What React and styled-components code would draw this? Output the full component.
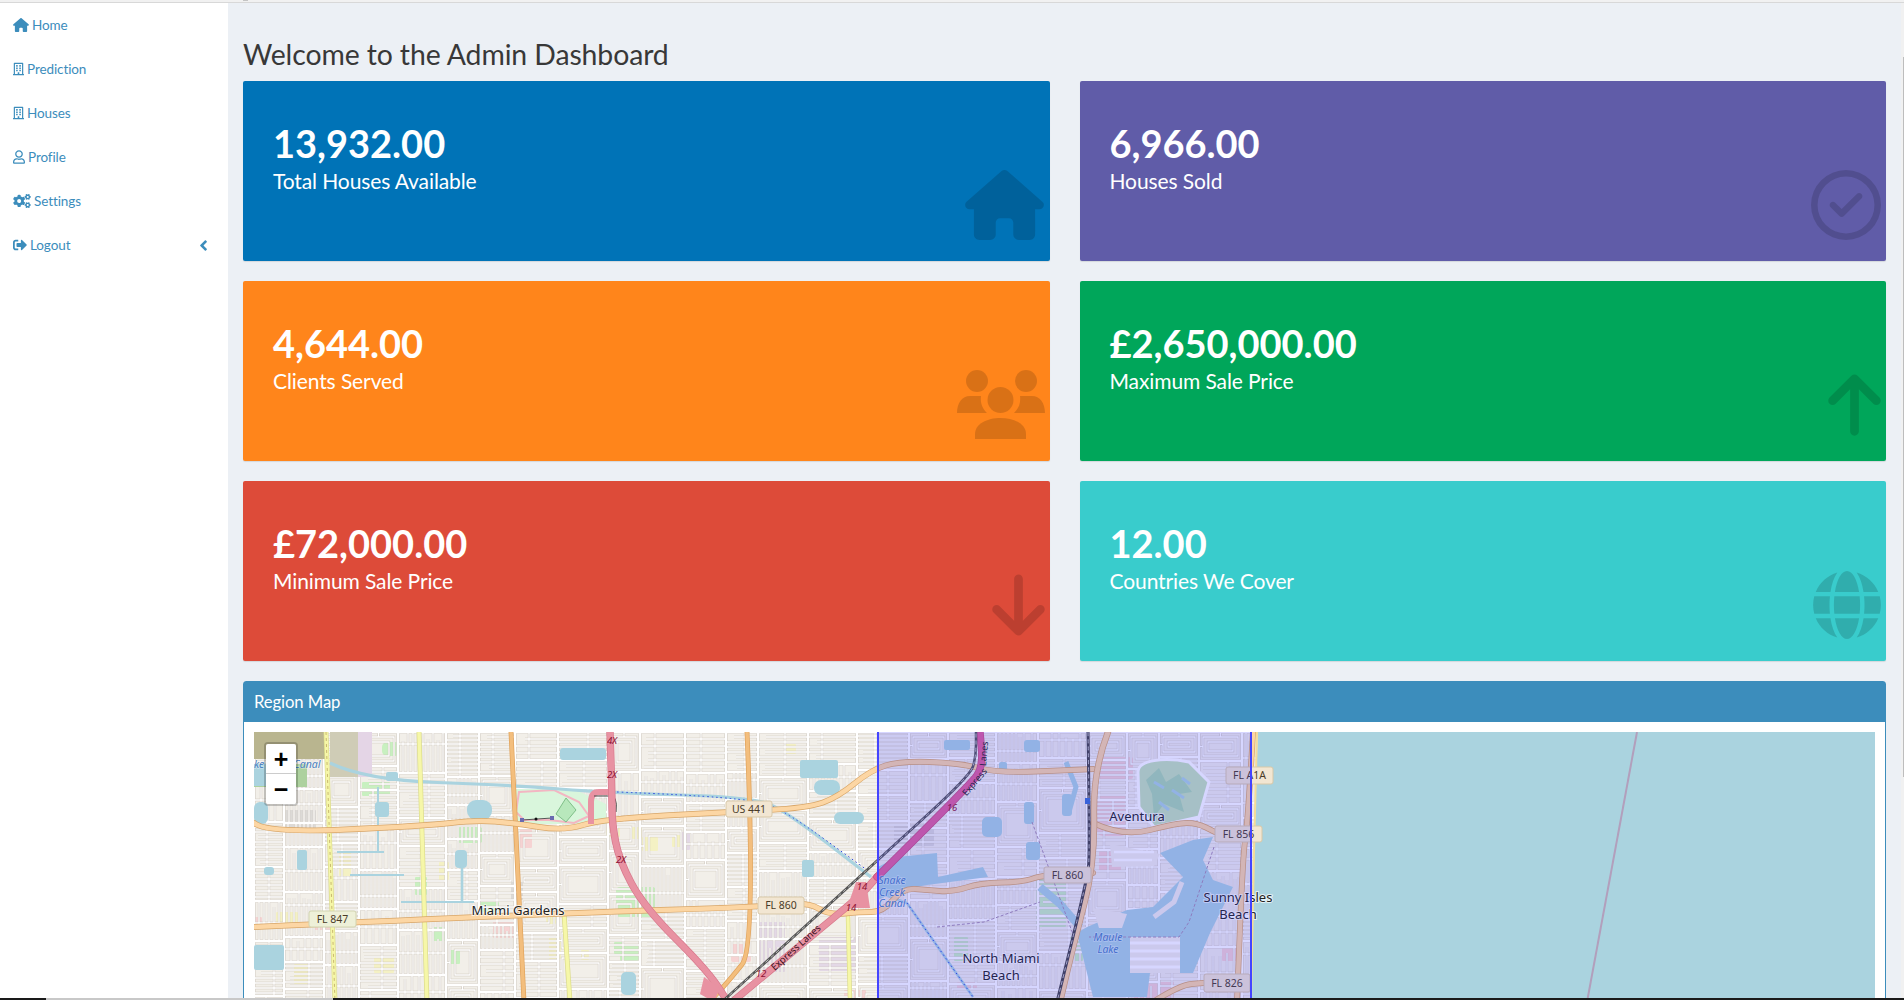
import React from "react";
import styled, { createGlobalStyle } from "styled-components";
import { FaHouse, FaArrowUp, FaArrowDown, FaRegCircleCheck } from "react-icons/fa6";
import { FaRegBuilding, FaRegUser, FaCogs, FaSignOutAlt, FaAngleLeft, FaGlobe } from "react-icons/fa";

const FONT = `Lato, "Open Sans", "Liberation Sans", sans-serif`;

const Global = createGlobalStyle`
  html, body { margin: 0; height: 1000px; overflow: hidden; background: #ecf0f5; }
  body { font-family: ${FONT}; color: #333; }
  * { box-sizing: border-box; }
`;

const Page = styled.div`
  display: flex; flex-direction: column; height: 1000px; overflow: hidden;
`;
const TopStrip = styled.div`
  flex: none; height: 3px; background: #f1f1f1; border-bottom: 1px solid #d8d8d8; padding-left: 243px;
`;
const TopNub = styled.div`
  width: 5px; height: 1px; background: #c4c4c4;
`;
const Body = styled.div`
  flex: 1; min-height: 0; display: flex;
`;
const Sidebar = styled.nav`
  flex: none; width: 228px; background: #fff;
`;
const NavRow = styled.a`
  display: flex; align-items: center; height: 44px; padding: 0 13px; gap: 3px;
  color: #3c8dbc; font-size: 13.5px; letter-spacing: -0.1px;
`;
const NavIcon = styled.span`
  flex: none; display: flex; width: ${p => p.$w}px; height: 14px;
  svg { width: 100%; height: 100%; }
`;
const NavChevron = styled.span`
  margin-left: auto; margin-right: 7px; display: flex; width: 9px; height: 17px;
  svg { width: 100%; height: 100%; }
`;
const Main = styled.main`
  flex: 1; min-width: 0; padding: 0 18px 0 15px; overflow: hidden;
`;
const Title = styled.h1`
  margin: 0; height: 78px; padding-top: 33px; font-size: 28.4px; line-height: 36px; font-weight: 400; color: #383838;
  letter-spacing: -0.1px; white-space: nowrap;
`;
const Cards = styled.section`
  display: grid; grid-template-columns: 1fr 1fr; column-gap: 30px; row-gap: 20px; margin-bottom: 20px;
`;
const Card = styled.article`
  position: relative; height: 180px; border-radius: 2px; background: ${p => p.$bg}; color: #fff;
  padding: 38px 30px 0; box-shadow: 0 1px 1px rgba(0,0,0,.1); overflow: hidden;
`;
const Value = styled.div`
  font-size: 38px; line-height: 48px; font-weight: 700;
`;
const Label = styled.div`
  font-size: 21px; line-height: 28px; letter-spacing: -0.1px;
`;
const CardIcon = styled.span`
  position: absolute; right: ${p => p.$right ?? 5}px; bottom: 21px; display: flex;
  width: ${p => p.$w}px; height: 70px; color: rgba(0,0,0,.15);
  svg { width: 100%; height: 100%; }
`;
const Panel = styled.section`
  border: 1px solid #3c8dbc; border-radius: 3px 3px 0 0; background: #fff;
`;
const PanelHead = styled.header`
  height: 40px; background: #3c8dbc; color: #fff; padding: 0 10px; display: flex; align-items: center;
  font-size: 16.7px; letter-spacing: -0.1px;
`;
const PanelBody = styled.div`
  padding: 10px;
`;
const MapBox = styled.div`
  position: relative; height: 300px; background: #aad3df; overflow: hidden;
  svg.map { display: block; }
`;
const Zoom = styled.div`
  position: absolute; left: 10px; top: 10px; width: 34px; border: 2px solid rgba(0,0,0,.2); border-radius: 4px;
  background-clip: padding-box; display: flex; flex-direction: column;
`;
const ZoomBtn = styled.a`
  height: 30px; background: #fff; color: #000; display: flex; align-items: center; justify-content: center;
  font: 700 25px/30px "Liberation Sans", sans-serif;
  &:first-child { border-bottom: 1px solid #ccc; border-radius: 2px 2px 0 0; }
  &:last-child { border-radius: 0 0 2px 2px; }
`;
const BottomBar = styled.div`
  position: fixed; left: 0; right: 0; bottom: 0; height: 2px; display: flex;
`;
const BarPart = styled.div`
  height: 2px;
  width: ${p => p.$w ? p.$w + "px" : "auto"};
  flex: ${p => p.$w ? "none" : "1"};
  background: ${p => p.$c};
`;
const ScrollTrack = styled.div`
  position: fixed; top: 3px; right: 0; width: 3px; height: 995px; background: #f1f1f1;
`;
const ScrollThumb = styled.div`
  position: absolute; right: 0; top: 54px; width: 1px; height: 720px; background: #bdbdbd;
`;

/* three-person glyph: two heads behind, one in front */
const PeopleIcon = () => (
  <svg viewBox="0 0 88 70" fill="currentColor">
    <circle cx="20" cy="11" r="11" />
    <circle cx="69" cy="11" r="11" />
    <circle cx="43.5" cy="30" r="13" />
    <path d="M0 43C0 33 5 26 13 26H24C23 34 26 39 30 43Z" />
    <path d="M88 43C88 33 83 26 75 26H63C64 34 61 39 57 43Z" />
    <path d="M18 69V64C18 54 30 48 43.5 48C57 48 69 54 69 64V69Z" />
  </svg>
);

/* ---------- map drawing ---------- */
const smooth = pts => {
  let d = `M${pts[0][0]} ${pts[0][1]}`;
  for (let i = 1; i < pts.length - 1; i++) {
    const mx = (pts[i][0] + pts[i + 1][0]) / 2, my = (pts[i][1] + pts[i + 1][1]) / 2;
    d += `Q${pts[i][0]} ${pts[i][1]} ${mx} ${my}`;
  }
  const l = pts[pts.length - 1];
  return d + `L${l[0]} ${l[1]}`;
};

function rng(seed) {
  let s = seed;
  return () => { s = (s * 16807) % 2147483647; return s / 2147483647; };
}

function streets() {
  const r = rng(4242);
  let fine = "", main = "";
  const H = 270;
  for (let x = 0; x < 1000;) {
    const w = 30 + Math.floor(r() * 24);
    for (let y = 0; y < H;) {
      const h = 24 + Math.floor(r() * 22);
      main += `M${x} ${y}h${w}`;
      const k = r();
      const step = 4 + Math.floor(r() * 4);
      if (k < 0.45) {
        for (let yy = y + step; yy < y + h - 2; yy += step) {
          const inset = r() < 0.35 ? 4 + Math.floor(r() * 8) : 0;
          fine += `M${x + inset} ${yy}h${w - inset}`;
        }
        fine += `M${x + Math.floor(w * (0.3 + r() * 0.4))} ${y}v${h}`;
      } else if (k < 0.82) {
        for (let xx = x + step; xx < x + w - 2; xx += step) {
          const inset = r() < 0.35 ? 4 + Math.floor(r() * 6) : 0;
          fine += `M${xx} ${y + inset}v${h - inset}`;
        }
        fine += `M${x} ${y + Math.floor(h * (0.3 + r() * 0.4))}h${w}`;
      } else {
        const cy = y + h / 2, cx = x + w / 2;
        fine += `M${x + 4} ${y + 5}H${x + w - 4}V${y + h - 5}H${x + 4}Z`;
        fine += `M${x + 9} ${y + 10}H${x + w - 9}V${y + h - 10}H${x + 9}Z`;
        fine += `M${cx} ${y}V${y + 5}M${x} ${cy}H${x + 4}`;
      }
      y += h;
    }
    main += `M${x} 0v${H}`;
    x += w;
  }
  return { fine, main };
}
const ST = streets();

const blobs = {
  water: [
    [213, 68, 25, 20, 9], [121, 70, 14, 15, 3], [546, 28, 38, 18, 2], [560, 48, 26, 15, 7], [306, 16, 46, 12, 3],
    [43, 118, 10, 20, 2], [201, 118, 12, 18, 4], [548, 128, 12, 17, 2], [367, 240, 15, 23, 5], [0, 213, 30, 25, 2],
    [0, 70, 14, 22, 6], [132, 40, 12, 9, 2], [580, 80, 30, 12, 6], [10, 135, 10, 8, 3],
    [728, 85, 20, 20, 5], [770, 70, 10, 22, 3], [772, 110, 14, 18, 3], [690, 8, 26, 10, 2], [770, 8, 16, 12, 3],
    [808, 62, 10, 22, 3], [745, 30, 8, 12, 2]
  ],
  green: [
    [108, 50, 28, 14, 1], [128, 10, 18, 14, 5], [178, 195, 14, 14, 1], [161, 145, 12, 18, 1], [362, 155, 40, 30, 4],
    [203, 95, 26, 16, 4], [196, 218, 10, 14, 1], [366, 212, 20, 18, 3], [225, 170, 20, 10, 1], [360, 210, 10, 12, 1],
    [782, 145, 30, 50, 1], [815, 205, 14, 24, 1], [700, 205, 14, 24, 1]
  ],
  yellow: [
    [418, 103, 18, 12, 1], [388, 105, 16, 14, 1], [378, 95, 10, 12, 1], [22, 180, 22, 14, 1], [120, 225, 20, 16, 1],
    [292, 180, 10, 12, 1], [295, 205, 12, 22, 1], [327, 218, 8, 10, 1], [40, 232, 14, 20, 1], [85, 120, 12, 24, 1],
    [185, 130, 10, 18, 1], [352, 95, 14, 10, 1], [530, 12, 12, 10, 1]
  ],
  pink: [
    [266, 95, 12, 21, 1], [239, 188, 23, 18, 1], [477, 212, 20, 18, 2], [0, 185, 8, 10, 1], [60, 188, 20, 10, 1], [590, 258, 22, 8, 1],
    [843, 25, 36, 22, 2], [843, 62, 30, 42, 6], [845, 118, 22, 22, 2], [880, 250, 40, 16, 1], [968, 215, 18, 14, 1], [703, 250, 20, 8, 1]
  ],
  lilac: [
    [426, 100, 10, 18, 1], [505, 190, 26, 50, 1], [565, 205, 40, 34, 1]
  ],
  grey: [
    [30, 78, 32, 20, 1], [257, 150, 12, 18, 1], [640, 92, 40, 22, 1], [290, 175, 8, 8, 1]
  ]
};

const COL = { green: "#c8f0c0", yellow: "#f4f1c4", pink: "#f6d3d3", lilac: "#e3d8e6", grey: "#dcdad7" };

const Road = ({ p, w, fill, edge }) => {
  const d = smooth(p);
  return (
    <>
      <path d={d} fill="none" stroke={edge} strokeWidth={w + 1.4} strokeLinecap="round" strokeLinejoin="round" />
      <path d={d} fill="none" stroke={fill} strokeWidth={w} strokeLinecap="round" strokeLinejoin="round" />
    </>
  );
};

const ORANGE = { fill: "#fcd6a4", edge: "#d8a668" };
const VERT = { fill: "#f3be7d", edge: "#e0a35c" };
const YEL = { fill: "#f6f7a8", edge: "#dcdc8c" };
const MOTOR = { fill: "#e892a2", edge: "#d8788c" };

const Shield = ({ x, y, w, h, text, fill = "#f2e6d2", edge = "#d8c8a8" }) => (
  <g>
    <rect x={x} y={y} width={w} height={h} rx="2" fill={fill} stroke={edge} />
    <text x={x + w / 2} y={y + h / 2 + 3.6} textAnchor="middle" fontSize="10.5" fill="#4a3c28" fontFamily='"Noto Sans", sans-serif'>{text}</text>
  </g>
);

const Place = ({ x, y, children, size = 13 }) => (
  <text x={x} y={y} textAnchor="middle" fontSize={size} fill="#222" fontFamily='"Noto Sans", sans-serif'
    stroke="rgba(255,255,255,.7)" strokeWidth="2" paintOrder="stroke">{children}</text>
);
const Water = ({ x, y, children }) => (
  <text x={x} y={y} textAnchor="middle" fontSize="10.5" fontStyle="italic" fill="#4a7fc0" fontFamily='"Noto Sans", sans-serif'
    stroke="rgba(255,255,255,.4)" strokeWidth="1.4" paintOrder="stroke">{children}</text>
);
const Ref = ({ x, y, children, rot }) => (
  <text x={x} y={y} textAnchor="middle" fontSize="9.5" fontStyle="italic" fill="#8c1030" fontFamily='"Noto Sans", sans-serif'
    transform={rot ? `rotate(${rot} ${x} ${y})` : undefined}>{children}</text>
);

const MapArt = () => (
  <svg className="map" width="1621" height="300" viewBox="0 0 1621 300">
    <rect x="0" y="0" width="1004" height="300" fill="#f2efe9" />
    {Object.entries(blobs).filter(([k]) => k !== "water").map(([k, arr]) =>
      arr.map((b, i) => <rect key={k + i} x={b[0]} y={b[1]} width={b[2]} height={b[3]} rx={b[4]} fill={COL[k]} />)
    )}
    <path d={ST.fine} fill="none" stroke="#c9c2b8" strokeWidth="2.3" />
    <path d={ST.main} fill="none" stroke="#c9c2b8" strokeWidth="3.2" />
    <path d={ST.fine} fill="none" stroke="#fff" strokeWidth="1.3" />
    <path d={ST.main} fill="none" stroke="#fff" strokeWidth="2.4" />

    {/* sea east of the coast line */}
    <path d="M1004 0L999 121L996 300H1100V0Z" fill="#aad3df" />

    {/* large land-use areas at the top left */}
    <rect x="0" y="0" width="72" height="27" fill="#b9b58f" />
    <rect x="76" y="0" width="28" height="45" fill="#cfccb6" />
    <rect x="104" y="0" width="14" height="45" fill="#e4d5e6" />
    <rect x="0" y="32" width="53" height="23" fill="#add19e" />
    <path d="M0 32h14v22H0z" fill="#aad3df" />

    {/* park */}
    <path d="M260 57H320L352 72V92H262Z" fill="#d9f6dc" />
    <path d="M265 60L300 58L325 70L335 84L320 91L295 88L270 88L262 80Z" fill="none" stroke="#f3b6c2" strokeWidth="2" />
    <path d="M302 82L312 66L322 78L312 90Z" fill="#b8e8bc" stroke="#7fbf88" />
    {/* golf course */}
    <path d="M884 40C884 28 910 25 935 30L955 50L945 85L900 95L885 75Z" fill="#c4e4b8" stroke="#fff" strokeWidth="3" />
    <path d="M892 48L905 36L912 50L925 42L938 60L925 62L930 80L910 72L900 85L898 62Z" fill="#a8d8ae" />
    <path d="M900 50L910 56M918 58L930 66M905 70L915 78M928 46L936 52" stroke="#aad3df" strokeWidth="3" />
    {/* bays */}
    <path d="M624 135L643 125L683 121L684 145L729 135L734 145L673 153L646 158L624 168Z" fill="#aad3df" />
    <path d="M833 195L873 178L899 175L929 145L906 121L939 108L959 105L949 128L959 148L979 155L956 201L939 241L896 241L893 265L839 265L823 201Z" fill="#aad3df" />
    <path d="M786 155L806 172L826 195" fill="none" stroke="#aad3df" strokeWidth="8" />
    <path d="M812 30L822 55L815 80" fill="none" stroke="#aad3df" strokeWidth="5" />
    <path d="M876 205H926V241H876Z" fill="#f2efe9" />
    <path d="M876 211H926M876 219H926M876 227H926M876 235H926" stroke="#fff" strokeWidth="3" />
    <path d="M839 176L873 182L868 196L845 196Z" fill="#f2efe9" />
    <path d="M900 185L920 170L928 150" stroke="#f2efe9" strokeWidth="5" fill="none" />
    <path d="M856 112L906 122L900 134L858 135Z" fill="#f2efe9" />
    <path d="M860 120H900M860 128H898" stroke="#fff" strokeWidth="2.4" />
    {blobs.water.map((b, i) => <rect key={"w" + i} x={b[0]} y={b[1]} width={b[2]} height={b[3]} rx={b[4]} fill="#aad3df" />)}

    {/* canals */}
    <path d={smooth([[76, 31], [112, 48], [255, 53], [356, 61], [499, 65], [533, 80], [617, 145]])} fill="none" stroke="#aad3df" strokeWidth="3.2" />
    <path d="M124 55V120M83 120H130M96 143H150M147 170H220" fill="none" stroke="#aad3df" strokeWidth="2" />
    <path d="M208 134V170M623 160L653 171L719 265" fill="none" stroke="#aad3df" strokeWidth="2.6" />
    <path d={smooth([[363, 60], [495, 65], [533, 80], [613, 138]])} fill="none" stroke="#2f47e0" strokeWidth="1" strokeDasharray="1.5 3" />
    <path d="M653 171L719 265" fill="none" stroke="#2f47e0" strokeWidth="1" strokeDasharray="1.5 3" />
    <path d="M683 195L730 190L786 170M778 90L820 205M960 115L935 190L925 205L835 205" fill="none" stroke="#a68fb0" strokeWidth="1" strokeDasharray="3 2" />

    {/* smaller roads */}
    <Road p={[[72, 0], [81, 270]]} w={3.5} {...YEL} />
    <path d="M72 0L81 270" stroke="#c9b870" strokeWidth="1" strokeDasharray="3 3" />
    <Road p={[[165, 0], [173, 270]]} w={3.5} {...YEL} />
    <Road p={[[310, 181], [316, 270]]} w={3.5} {...YEL} />
    <Road p={[[594, 185], [596, 270]]} w={3} {...YEL} />
    <Road p={[[257, 0], [270, 270]]} w={3.5} {...VERT} />
    <Road p={[[493, 0], [502, 215], [474, 250], [455, 270]]} w={3.5} {...VERT} />
    <Road p={[[0, 91], [11, 101], [171, 94], [222, 88], [260, 91], [310, 99], [348, 87], [474, 80], [554, 76], [584, 65], [617, 38], [646, 29], [706, 31], [743, 41], [819, 38], [839, 37]]} w={4.5} {...ORANGE} />
    <Road p={[[0, 195], [310, 181], [504, 175], [554, 170], [575, 183], [606, 180], [629, 180], [649, 156], [673, 158], [699, 160], [726, 151], [769, 150], [789, 143], [839, 141]]} w={4.5} {...ORANGE} />
    <Road p={[[839, 91], [869, 105], [923, 91], [943, 91], [961, 100]]} w={4.5} {...ORANGE} />
    <Road p={[[899, 270], [926, 253], [949, 251]]} w={4.5} {...ORANGE} />
    <Road p={[[999, 0], [994, 88], [989, 121], [983, 270]]} w={4.5} {...ORANGE} />
    <path d="M1003 0L1000 120L997 270" fill="none" stroke="#f4dc9a" strokeWidth="2" />

    {/* motorways */}
    <path d="M337 92V70Q337 60 345 60H358" fill="none" stroke="#e892a2" strokeWidth="6" />
    <path d="M340 64H355Q364 62 362 80" fill="none" stroke="#444" strokeWidth="1" />
    <Road p={[[356, 0], [358, 61], [358, 91], [365, 128], [390, 175], [453, 238], [474, 270]]} w={6} {...MOTOR} />
    <path d="M450 245L466 256L460 270L446 262Z" fill="#e892a2" />
    <Road p={[[478, 270], [567, 196], [605, 165], [623, 145]]} w={6} {...MOTOR} />
    <Road p={[[623, 145], [716, 53], [729, 35], [726, 0]]} w={6} fill="#e0609a" edge="#c8507f" />
    <path d={smooth([[470, 268], [556, 190], [626, 126], [716, 44], [722, 25], [722, 0]])} fill="none" stroke="#555" strokeWidth="2.5" />
    <path d={smooth([[470, 268], [556, 190], [626, 126], [716, 44], [722, 25], [722, 0]])} fill="none" stroke="#ddd" strokeWidth=".8" strokeDasharray="4 3" />
    <path d="M593 176L602 150L612 150L616 176Z" fill="#e892a2" />
    <Road p={[[854, 0], [839, 38], [841, 131], [819, 215], [806, 270]]} w={5} {...ORANGE} />
    <path d={smooth([[834, 0], [836, 121], [833, 148], [803, 270]])} fill="none" stroke="#444" strokeWidth="3" />
    <path d={smooth([[834, 0], [836, 121], [833, 148], [803, 270]])} fill="none" stroke="#ddd" strokeWidth=".8" strokeDasharray="4 3" />
    <rect x="831" y="66" width="5" height="6" fill="#3b6fd0" />
    {/* small survey marker in the park */}
    <path d="M268 88L298 86" stroke="#555" strokeWidth="1" />
    <rect x="266" y="86" width="4" height="4" fill="#6a6ab0" />
    <rect x="296" y="84" width="4" height="4" fill="#6a6ab0" />
    <circle cx="282" cy="87" r="1.5" fill="#111" />

    {/* sea line */}
    <path d="M1383 0L1333 270" stroke="#b29fbc" strokeWidth="2" />

    {/* labels */}
    <Water x={5} y={36}>ke</Water>
    <Water x={53} y={36}>Canal</Water>
    <Ref x={358} y={12}>4X</Ref>
    <Ref x={358} y={46}>2X</Ref>
    <Ref x={367} y={131}>2X</Ref>
    <Ref x={608} y={158}>14</Ref>
    <Ref x={597} y={179}>14</Ref>
    <Ref x={507} y={245}>12</Ref>
    <Ref x={698} y={79}>16</Ref>
    <text x="544" y="218" textAnchor="middle" fontSize="9.5" fill="#3a1020" transform="rotate(-42 544 218)" fontFamily='"Noto Sans", sans-serif'>Express Lanes</text>
    <text x="723" y="52" textAnchor="middle" fontSize="9" fill="#222" transform="rotate(-50 723 52)" fontFamily='"Noto Sans", sans-serif'>Express</text>
    <text x="733" y="22" textAnchor="middle" fontSize="9" fill="#222" transform="rotate(-85 733 22)" fontFamily='"Noto Sans", sans-serif'>Lanes</text>
    <Place x={264} y={183}>Miami Gardens</Place>
    <Shield x={472} y={69} w={46} h={16} text="US 441" />
    <Shield x={55} y={179} w={47} h={16} text="FL 847" fill="#eef0d8" edge="#d2d4b0" />
    <Shield x={504} y={165} w={46} h={17} text="FL 860" />
    <Shield x={790} y={135} w={47} h={16} text="FL 860" />
    <Shield x={972} y={35} w={47} h={17} text="FL A1A" />
    <Shield x={961} y={94} w={47} h={16} text="FL 856" />
    <Shield x={950} y={242} w={46} h={18} text="FL 826" />
    <Place x={883} y={89}>Aventura</Place>
    <Place x={984} y={170}>Sunny Isles</Place>
    <Place x={984} y={187}>Beach</Place>
    <Place x={747} y={231}>North Miami</Place>
    <Place x={747} y={248}>Beach</Place>
    <Water x={638} y={152}>Snake</Water>
    <Water x={638} y={164}>Creek</Water>
    <Water x={638} y={175}>Canal</Water>
    <Water x={854} y={209}>Maule</Water>
    <Water x={854} y={221}>Lake</Water>

    {/* region polygon */}
    <rect x="624" y="-4" width="373" height="310" fill="#3333ff" fillOpacity=".2" stroke="#4444ff" strokeWidth="2" />
  </svg>
);

const CARDS = [
  { v: "13,932.00", l: "Total Houses Available", bg: "#0073b7", i: <FaHouse />, w: 79, right: 6 },
  { v: "6,966.00", l: "Houses Sold", bg: "#605ca8", i: <FaRegCircleCheck />, w: 70 },
  { v: "4,644.00", l: "Clients Served", bg: "#ff851b", i: <PeopleIcon />, w: 88 },
  { v: "£2,650,000.00", l: "Maximum Sale Price", bg: "#00a65a", i: <FaArrowUp />, w: 53 },
  { v: "£72,000.00", l: "Minimum Sale Price", bg: "#dd4b39", i: <FaArrowDown />, w: 53 },
  { v: "12.00", l: "Countries We Cover", bg: "#39cccc", i: <FaGlobe />, w: 68 }
];

const NAV = [
  { t: "Home", i: <FaHouse />, w: 16 },
  { t: "Prediction", i: <FaRegBuilding />, w: 11 },
  { t: "Houses", i: <FaRegBuilding />, w: 11 },
  { t: "Profile", i: <FaRegUser />, w: 12 },
  { t: "Settings", i: <FaCogs />, w: 18 },
  { t: "Logout", i: <FaSignOutAlt />, w: 14, chevron: true }
];

export default function App() {
  return (
    <Page>
      <Global />
      <TopStrip><TopNub /></TopStrip>
      <Body>
        <Sidebar>
          {NAV.map(n => (
            <NavRow key={n.t}>
              <NavIcon $w={n.w}>{n.i}</NavIcon><span>{n.t}</span>
              {n.chevron && <NavChevron><FaAngleLeft /></NavChevron>}
            </NavRow>
          ))}
        </Sidebar>
        <Main>
          <Title>Welcome to the Admin Dashboard</Title>
          <Cards>
            {CARDS.map(c => (
              <Card key={c.l} $bg={c.bg}>
                <Value>{c.v}</Value>
                <Label>{c.l}</Label>
                <CardIcon $w={c.w} $right={c.right}>{c.i}</CardIcon>
              </Card>
            ))}
          </Cards>
          <Panel>
            <PanelHead>Region Map</PanelHead>
            <PanelBody>
              <MapBox>
                <MapArt />
                <Zoom>
                  <ZoomBtn>+</ZoomBtn>
                  <ZoomBtn>−</ZoomBtn>
                </Zoom>
              </MapBox>
            </PanelBody>
          </Panel>
        </Main>
      </Body>
      <ScrollTrack><ScrollThumb /></ScrollTrack>
      <BottomBar>
        <BarPart $w={46} $c="#1a1a1a" />
        <BarPart $w={287} $c="#c8c8c8" />
        <BarPart $c="#1a1a1a" />
      </BottomBar>
    </Page>
  );
}
